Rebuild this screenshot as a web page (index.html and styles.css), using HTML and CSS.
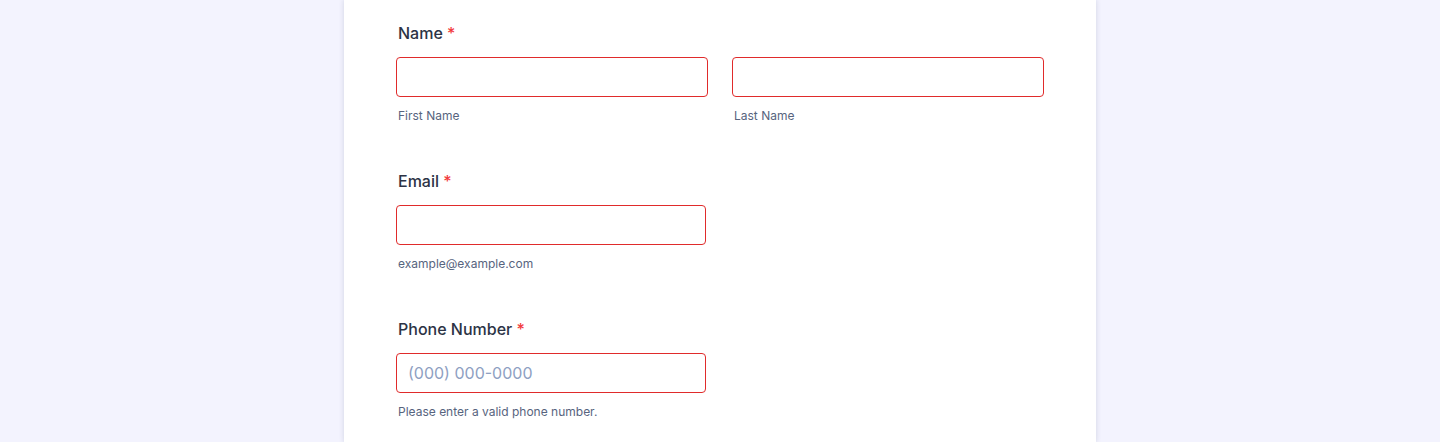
FILE: index.html
```html
<!DOCTYPE html>
<html lang="en">
<head>
<meta charset="utf-8">
<title>Form</title>
<link rel="stylesheet" href="styles.css">
</head>
<body>
<main class="card">
  <section class="field">
    <div class="label">Name <span class="req">*</span></div>
    <div class="row">
      <div class="col">
        <input class="input" type="text" aria-label="First Name">
        <div class="sub">First Name</div>
      </div>
      <div class="col">
        <input class="input" type="text" aria-label="Last Name">
        <div class="sub">Last Name</div>
      </div>
    </div>
  </section>
  <section class="field">
    <div class="label">Email <span class="req">*</span></div>
    <div class="col half">
      <input class="input" type="email" aria-label="Email">
      <div class="sub">example@example.com</div>
    </div>
  </section>
  <section class="field">
    <div class="label">Phone Number <span class="req">*</span></div>
    <div class="col half">
      <input class="input" type="tel" placeholder="(000) 000-0000" aria-label="Phone Number">
      <div class="sub">Please enter a valid phone number.</div>
    </div>
  </section>
</main>
</body>
</html>
```
FILE: styles.css
```css
html, body {
  margin: 0;
  padding: 0;
  height: 100%;
}
body {
  background: #f3f3fe;
  font-family: Inter, "Noto Sans", sans-serif;
  overflow: hidden;
}
.card {
  width: 752px;
  margin: 0 auto;
  min-height: 100%;
  box-sizing: border-box;
  background: #fff;
  padding: 23px 52px 0 52px;
  box-shadow: 0 0 5px rgba(87, 100, 126, 0.22);
  display: flex;
  flex-direction: column;
  gap: 47px;
}
.field {
  display: flex;
  flex-direction: column;
}
.label {
  font-size: 16px;
  line-height: 20px;
  font-weight: 500;
  color: #2c3345;
  padding-left: 2px;
  margin-bottom: 14px;
}
.req {
  color: #f23a3c;
}
.row {
  display: flex;
  gap: 24px;
}
.col {
  display: flex;
  flex-direction: column;
  width: 312px;
}
.col.half {
  width: 310px;
}
.input {
  box-sizing: border-box;
  width: 100%;
  height: 40px;
  border: 1px solid #e02b2b;
  border-radius: 4px;
  background: #fff;
  padding: 0 11px;
  font-family: Inter, "Noto Sans", sans-serif;
  font-size: 16px;
  color: #2c3345;
  outline: none;
  margin: 0;
}
.input::placeholder {
  color: #8ea0c2;
  font-weight: 400;
}
.sub {
  font-size: 12px;
  line-height: 16px;
  color: #57647e;
  margin-top: 11px;
  padding-left: 2px;
}
```
